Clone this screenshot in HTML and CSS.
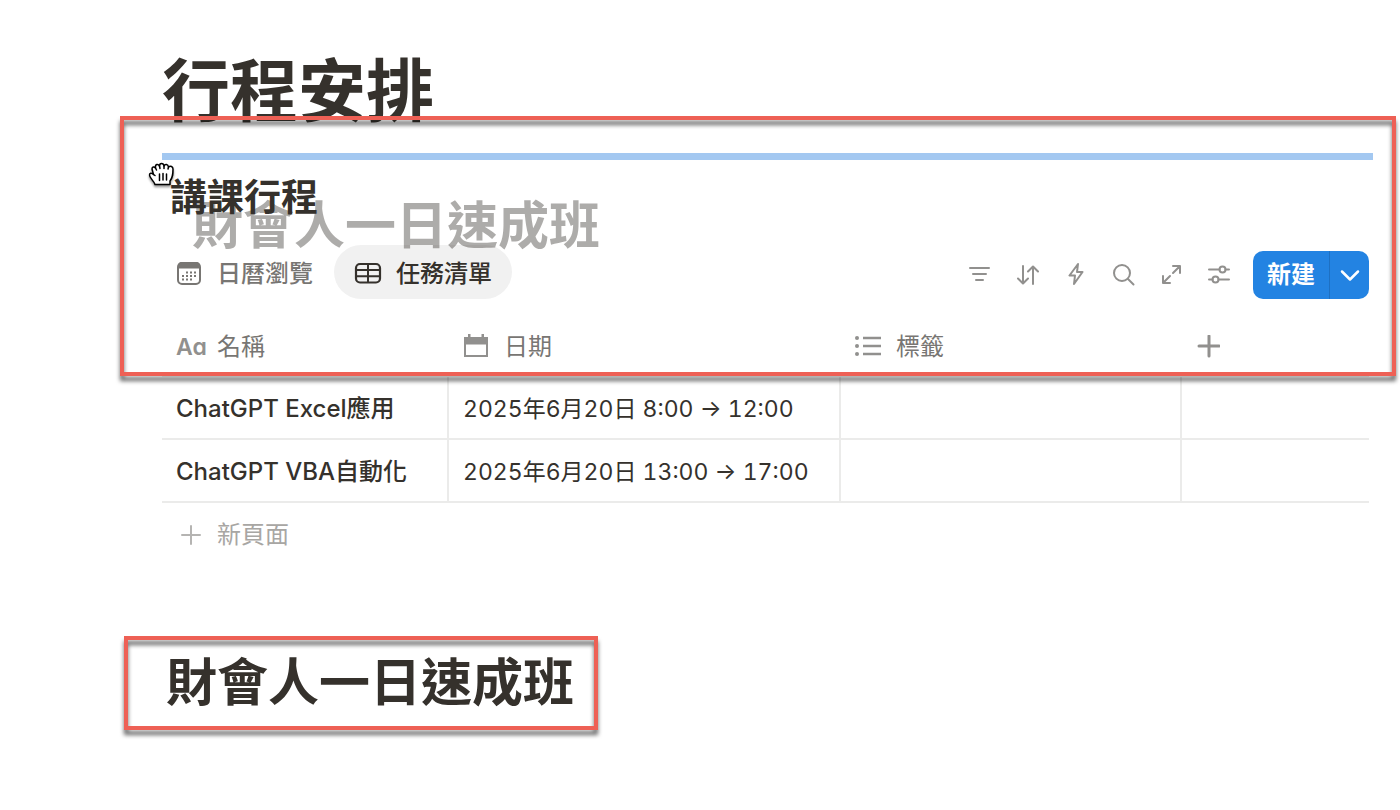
FILE: index.html
```
<!DOCTYPE html>
<html lang="zh-Hant">

<head>
    <meta charset="UTF-8">
    <meta name="viewport" content="width=device-width, initial-scale=1.0">
    <title>行程安排</title>
    <link rel="stylesheet" href="styles.css">
</head>

<body>
    <main class="page">
        <h1 class="page-title">行程安排</h1>

        <section class="database">
            <div class="drop-line"></div>
            <h3 class="database-title">講課行程</h3>

            <div class="toolbar">
                <div class="tabs">
                    <button class="tab" type="button">
                        <svg class="tab-icon" viewBox="0 0 28 28">
                            <rect x="3" y="3" width="22" height="21" rx="4" fill="none" stroke="currentColor" stroke-width="2"/>
                            <path d="M3 8.500V6q0-4 4-4h14q4 0 4 4v2.500z" fill="currentColor"/>
                            <path d="M11 12.500h10M7 16h14M7 19.500h10" fill="none" stroke="currentColor" stroke-width="2" stroke-dasharray="2 2"/>
                        </svg>
                        日曆瀏覽
                    </button>
                    <button class="tab tab-active" type="button">
                        <svg class="tab-icon" viewBox="0 0 28 28">
                            <rect x="2" y="4" width="24" height="18.500" rx="4" fill="none" stroke="currentColor" stroke-width="2.200"/>
                            <path d="M2 10h24M2 16.300h24M14 4v18" fill="none" stroke="currentColor" stroke-width="2"/>
                        </svg>
                        任務清單
                    </button>
                </div>

                <div class="actions">
                    <div class="icon-group">
                        <button class="icon-button" type="button" aria-label="篩選">
                            <svg viewBox="0 0 24 24"><path d="M3 5h19M6 11h13M9 17h7"/></svg>
                        </button>
                        <button class="icon-button" type="button" aria-label="排序">
                            <svg viewBox="0 0 24 24"><path d="M8 3v17M3 15.500l5 5 5-5M18 21V4M13 8.500l5-5 5 5"/></svg>
                        </button>
                        <button class="icon-button" type="button" aria-label="自動化">
                            <svg viewBox="0 0 24 24"><path d="M15 1L6.500 12.500H12L11 21l8.500-12H14z"/></svg>
                        </button>
                        <button class="icon-button" type="button" aria-label="搜尋">
                            <svg viewBox="0 0 24 24"><circle cx="11" cy="10" r="8"/><path d="M17 16l5.500 5.500"/></svg>
                        </button>
                        <button class="icon-button" type="button" aria-label="展開">
                            <svg viewBox="0 0 24 24"><path d="M14 10l7-7M14 3h7v7M11 13l-7 7M4 13v7h7"/></svg>
                        </button>
                        <button class="icon-button" type="button" aria-label="設定">
                            <svg viewBox="0 0 24 24"><path d="M2 6.500h10.500M18.500 6.500H22M2 16.500h3.500M11.500 16.500H22"/><circle cx="15.500" cy="6.500" r="3"/><circle cx="8.500" cy="16.500" r="3"/></svg>
                        </button>
                    </div>
                    <div class="new-group">
                        <button class="new-button" type="button">新建</button>
                        <button class="new-more" type="button" aria-label="更多">
                            <svg viewBox="0 0 20 20"><path d="M2 6.500l8 8 8-8"/></svg>
                        </button>
                    </div>
                </div>
            </div>

            <div class="drag-ghost">財會人一日速成班</div>
            <svg class="cursor" viewBox="0 0 28 28">
                <path d="M7 23.500C6 20 1.500 17 1.500 14c0-2 2-2.500 4-.5L4 8c0-2 2-3 3.500-1C7 3 10 2.500 11.500 5c0-3.500 4-3.500 4.500 0 1-2.500 4-2 4.500 1 2-1.500 4.500-.5 4.500 2 0 5 0 8-3 12v3.500z"/>
                <path d="M5.500 13.500l1.500 1M7.500 7l1 2M11.500 5l.5 2.500M16 5v2.500M20.500 6L20 8M11.500 13v6.500M15 12.500V19M18.500 13v6"/>
            </svg>

            <table class="table">
                <thead>
                    <tr>
                        <th class="col-name">
                            <div class="head"><span class="text-icon">Aa</span>名稱</div>
                        </th>
                        <th class="col-date">
                            <div class="head">
                                <svg class="head-icon" viewBox="0 0 26 26"><path fill="currentColor" fill-rule="evenodd" d="M5 0h2.500v3h11V0H21v3h4v20H1V3h4zM3 10.500V21h20V10.500z"/></svg>
                                日期
                            </div>
                        </th>
                        <th class="col-tags">
                            <div class="head">
                                <svg class="head-icon" viewBox="0 0 26 26"><path d="M8 4h18M8 12h18M8 20h18" stroke="currentColor" stroke-width="2.500"/><g fill="currentColor"><circle cx="2" cy="4" r="2"/><circle cx="2" cy="12" r="2"/><circle cx="2" cy="20" r="2"/></g></svg>
                                標籤
                            </div>
                        </th>
                        <th>
                            <button class="add-column" type="button" aria-label="新增欄位">
                                <svg viewBox="0 0 24 24"><path d="M13 1v20M3 11h20"/></svg>
                            </button>
                        </th>
                    </tr>
                </thead>
                <tbody>
                    <tr>
                        <td class="name">ChatGPT Excel應用</td>
                        <td class="date">2025年6月20日 8:00 → 12:00</td>
                        <td></td>
                        <td></td>
                    </tr>
                    <tr>
                        <td class="name">ChatGPT VBA自動化</td>
                        <td class="date">2025年6月20日 13:00 → 17:00</td>
                        <td></td>
                        <td></td>
                    </tr>
                </tbody>
            </table>
            <button class="new-page" type="button">
                <svg viewBox="0 0 24 24"><path d="M12 3v18M3 12h18"/></svg>
                新頁面
            </button>
            <div class="mark mark-database"></div>
        </section>

        <section class="course">
            <h2 class="course-title">財會人一日速成班</h2>
            <div class="mark mark-course"></div>
        </section>
    </main>
</body>

</html>
```
FILE: styles.css
```
body {
    margin: 0;
    background: #fff;
    color: #35312c;
    font-family: Inter, "Noto Sans CJK TC", sans-serif;
    font-size: 24px;
    line-height: 32px;
}

button {
    margin: 0;
    padding: 0;
    border: none;
    background: none;
    color: inherit;
    font: inherit;
    cursor: pointer;
}

svg {
    display: block;
    flex: none;
}

.page {
    padding: 54px 31px 64px 162px;
}

.page-title {
    margin: 0;
    font-size: 68px;
    line-height: 75px;
    font-weight: 700;
}

.database {
    position: relative;
    padding-top: 24px;
}

.drop-line {
    height: 7px;
    margin-right: -4px;
    background: #a3c8f1;
}

.database-title {
    margin: 16px 0 0 8px;
    font-size: 37px;
    line-height: 44px;
    font-weight: 700;
}

/* Tabs and actions */
.toolbar {
    display: flex;
    justify-content: space-between;
    align-items: flex-end;
    margin-top: 25px;
}

.tabs,
.actions,
.icon-group {
    display: flex;
    align-items: center;
}

.tab {
    display: flex;
    align-items: center;
    gap: 14px;
    box-sizing: border-box;
    height: 54px;
    padding: 4px 21px 0 13px;
    color: #787673;
    font-weight: 500;
}

.tab-active {
    padding: 4px 20px 0;
    border-radius: 27px;
    background: #f1f1f1;
    color: #35312c;
}

.tab-icon {
    width: 28px;
    height: 28px;
}

.actions {
    gap: 22px;
}

.icon-group {
    gap: 24px;
}

.icon-button svg,
.add-column svg,
.new-page svg {
    width: 24px;
    height: 24px;
    fill: none;
    stroke: #91908e;
    stroke-width: 2;
    stroke-linecap: round;
    stroke-linejoin: round;
}

.new-group {
    display: flex;
    height: 48px;
    border-radius: 10px;
    background: #2383e2;
    color: #fff;
}

.new-button {
    width: 76px;
    font-weight: 700;
}

.new-more {
    display: flex;
    align-items: center;
    justify-content: center;
    width: 40px;
    border-left: 1px solid #1d70c3;
    box-sizing: border-box;
}

.new-more svg {
    width: 20px;
    height: 20px;
    fill: none;
    stroke: #fff;
    stroke-width: 2.5;
    stroke-linecap: round;
    stroke-linejoin: round;
}

/* Block being dragged */
.drag-ghost {
    position: absolute;
    top: 67px;
    left: 30px;
    font-size: 51px;
    line-height: 60px;
    font-weight: 700;
    white-space: nowrap;
    opacity: 0.4;
    pointer-events: none;
}

.cursor {
    position: absolute;
    top: 32px;
    left: -14px;
    width: 28px;
    height: 28px;
    fill: #fff;
    stroke: #000;
    stroke-width: 1.5;
    stroke-linecap: round;
    stroke-linejoin: round;
    filter: drop-shadow(0 2px 1px rgba(0, 0, 0, 0.4));
}

/* Table */
.table {
    width: 100%;
    margin-top: 15px;
    border-collapse: separate;
    border-spacing: 0;
    table-layout: fixed;
}

.table th,
.table td {
    box-sizing: border-box;
    height: 63px;
    padding: 2px 14px 0;
    border-bottom: 2px solid #ebebea;
    text-align: left;
    font-weight: 400;
    white-space: nowrap;
}

.table th {
    padding-top: 4px;
}

.table td {
    border-right: 2px solid #ebebea;
}

.table td:last-child {
    border-right: none;
}

.table .name {
    font-weight: 500;
}

.table .date {
    font-size: 23px;
    font-variant-numeric: tabular-nums;
}

.col-name {
    width: 287px;
}

.col-date {
    width: 392px;
}

.col-tags {
    width: 341px;
}

.head {
    display: flex;
    align-items: center;
    gap: 15px;
    color: #787673;
}

.text-icon {
    width: 26px;
    color: #91908e;
    font-size: 23px;
    font-weight: 600;
    font-feature-settings: "cv11";
}

.head-icon {
    width: 26px;
    height: 26px;
    color: #91908e;
}

.add-column {
    display: flex;
    align-items: center;
    height: 32px;
}

.add-column svg {
    stroke-width: 3;
}

.new-page {
    display: flex;
    align-items: center;
    gap: 14px;
    height: 64px;
    padding: 0 17px;
    color: #a8a6a3;
}

.new-page svg {
    stroke: #b5b4b2;
}

.course {
    position: relative;
    width: fit-content;
    margin-top: 86px;
}

.course-title {
    margin: 0 0 0 4px;
    font-size: 51px;
    line-height: 60px;
    font-weight: 700;
}

/* Highlight frames */
.mark {
    position: absolute;
    box-sizing: border-box;
    border: 4px solid #ee6055;
    filter: drop-shadow(0 5px 2px rgba(0, 0, 0, 0.6));
    pointer-events: none;
}

.mark-database {
    top: -13px;
    left: -42px;
    right: -27px;
    height: 260px;
}

.mark-course {
    top: -17px;
    bottom: -17px;
    left: -38px;
    right: -24px;
}
```
